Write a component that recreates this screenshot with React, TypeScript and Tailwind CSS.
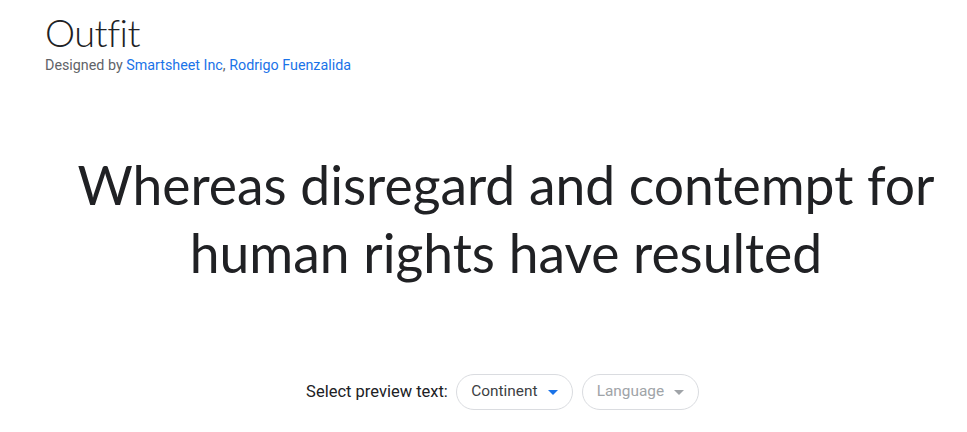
import React from "react";

export default function App() {
  return (
    <div className="w-[967px] h-[432px] bg-white pl-[45px] overflow-hidden">
      <div className="pt-[10px]">
        <h1 className="text-[38px] leading-[44px] font-light text-[#202124] font-['Lato',sans-serif] tracking-[-0.5px]">Outfit</h1>
        <p className="mt-[2px] text-[14.3px] leading-[18px] text-[#5f6368] font-['Roboto',sans-serif]">
          Designed by <span className="text-[#1a73e8]">Smartsheet Inc</span>, <span className="text-[#1a73e8]">Rodrigo Fuenzalida</span>
        </p>
      </div>
      <div className="mt-[76px] text-center text-[53.4px] leading-[68px] text-[#202124] font-['Lato',sans-serif]">
        Whereas disregard and contempt for
        <br />
        human rights have resulted
      </div>
      <div className="mt-[88px] mr-[7px] flex items-center justify-center font-['Roboto',sans-serif]">
        <span className="text-[16.5px] text-[#202124] mr-[8px]">Select preview text:</span>
        <button className="h-[36px] w-[117px] rounded-full border border-[#dadce0] flex items-center justify-center gap-[10px] text-[15.4px] text-[#3c4043]">
          Continent
          <svg width="10" height="5" viewBox="0 0 10 5"><path d="M0 0h10L5 5z" fill="#1a73e8" /></svg>
        </button>
        <button className="ml-[9px] h-[36px] w-[117px] rounded-full border border-[#dadce0] flex items-center justify-center gap-[10px] text-[15.4px] text-[#a0a4a8]">
          Language
          <svg width="10" height="5" viewBox="0 0 10 5"><path d="M0 0h10L5 5z" fill="#a0a4a8" /></svg>
        </button>
      </div>
    </div>
  );
}
